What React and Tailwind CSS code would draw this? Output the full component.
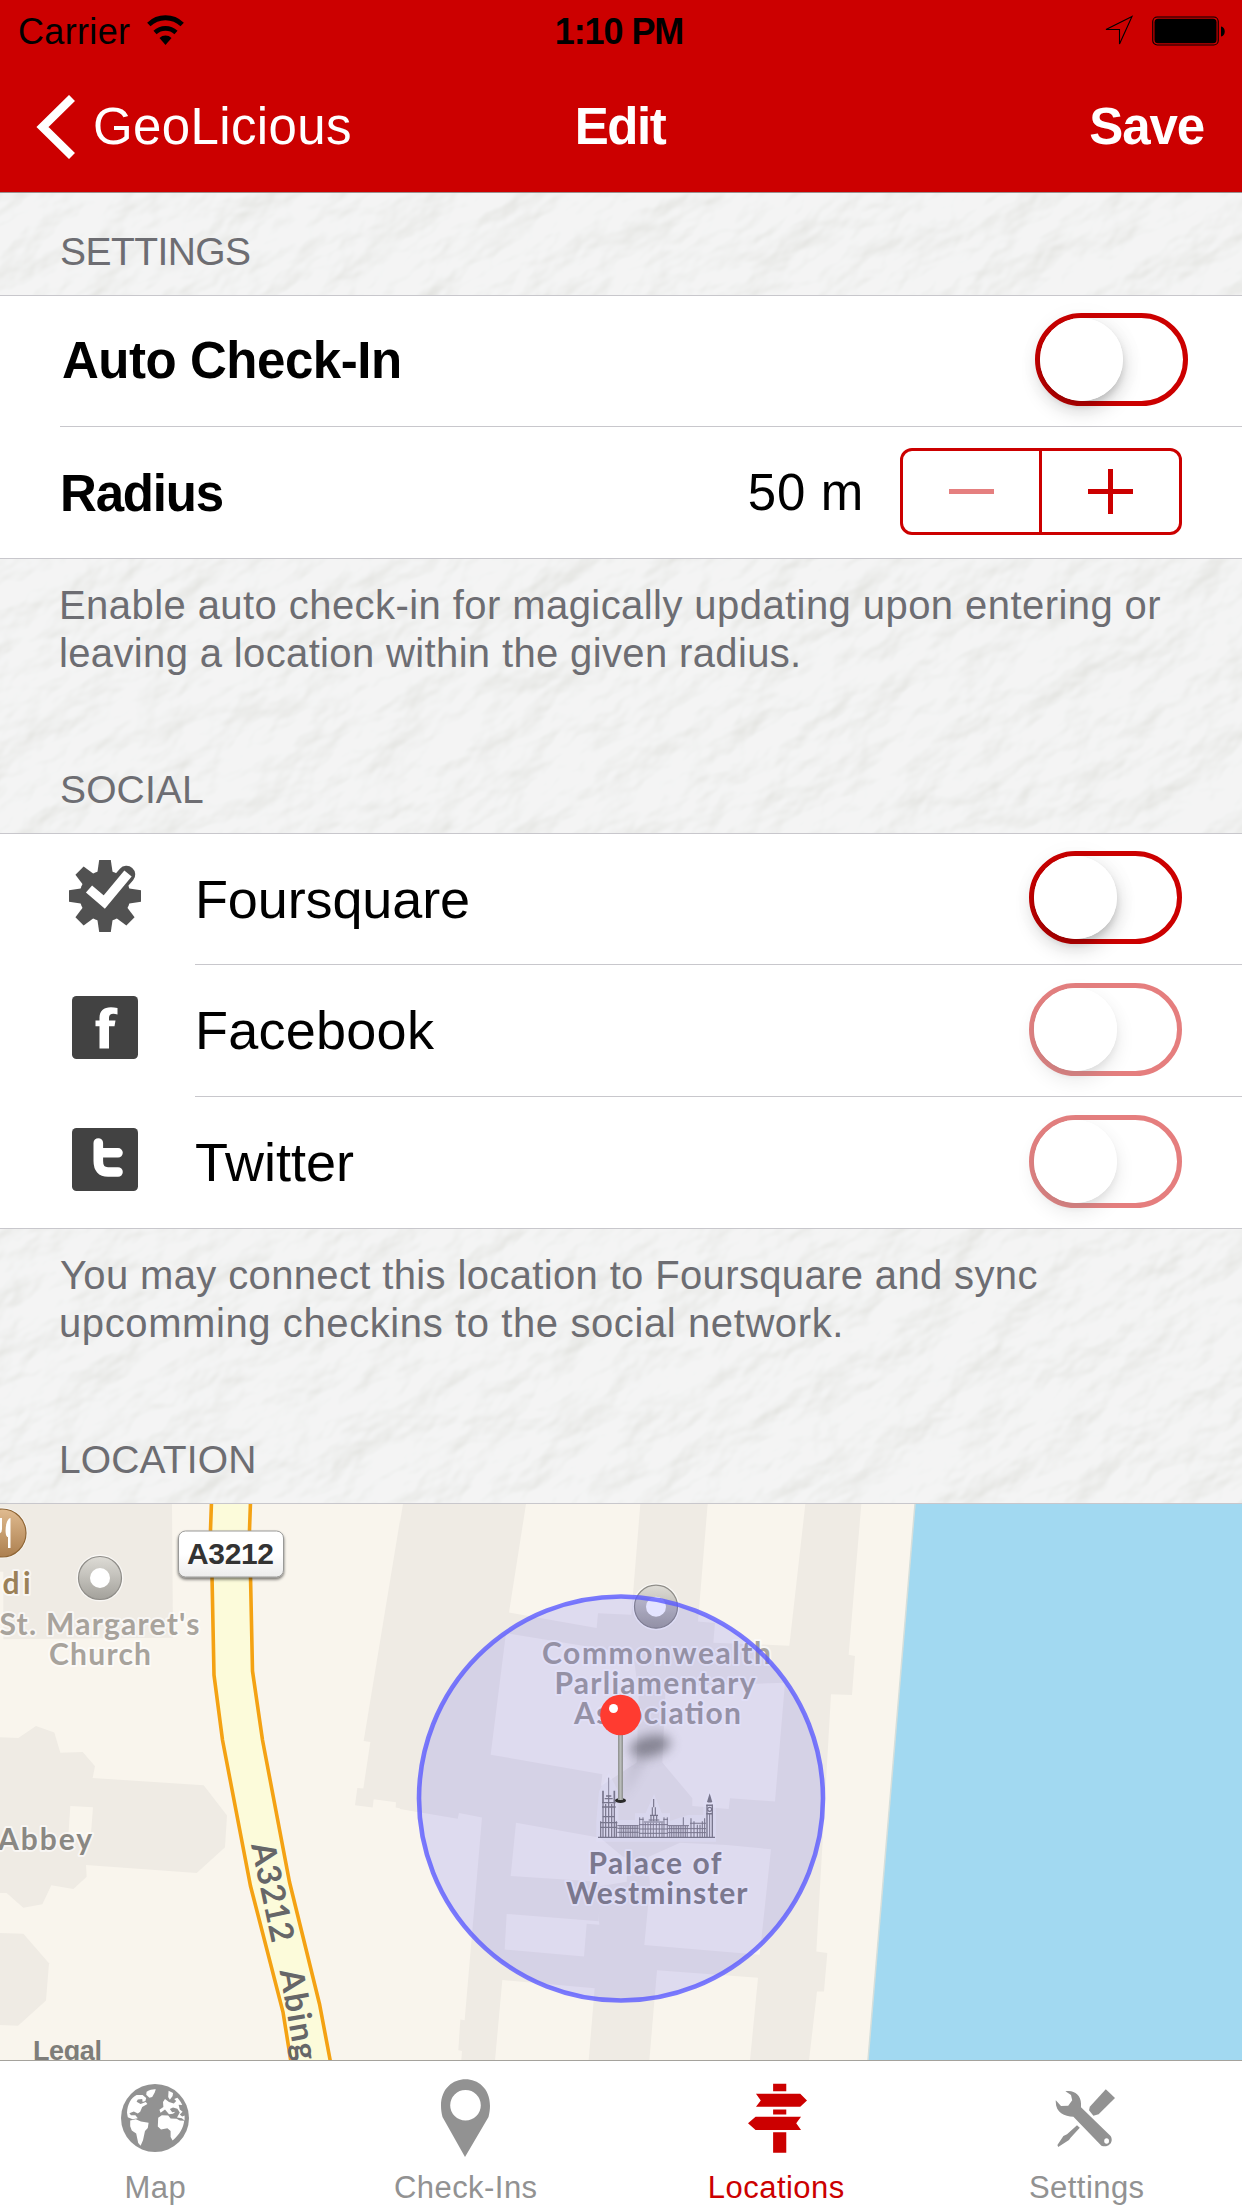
import React from "react";

const label = { fontFamily: "Lato, 'Open Sans', sans-serif", fontWeight: 700 };

function Leather() {
  return (
    <svg className="absolute inset-0" width="1242" height="2208" viewBox="0 0 1242 2208" aria-hidden="true">
      <defs>
        <filter id="grain" filterUnits="userSpaceOnUse" x="-1300" y="-200" width="2900" height="2900" colorInterpolationFilters="sRGB">
          <feTurbulence type="fractalNoise" baseFrequency="0.014 0.023" numOctaves="4" seed="8" />
          <feGaussianBlur stdDeviation="1.4" />
          <feDiffuseLighting surfaceScale="9" diffuseConstant="1.1" lightingColor="#ffffff">
            <feDistantLight azimuth="255" elevation="58" />
          </feDiffuseLighting>
          <feColorMatrix values="0.1 0 0 0 0.856  0 0.1 0 0 0.858  0 0 0.12 0 0.838  0 0 0 1 0" />
        </filter>
      </defs>
      <g transform="rotate(-30)">
        <rect x="-1300" y="-200" width="2900" height="2900" filter="url(#grain)" />
      </g>
    </svg>
  );
}

function StatusBar() {
  return (
    <div className="grid h-[63px] grid-cols-[1fr_auto_1fr] items-center text-[36px] leading-[63px] text-black">
      <div className="flex items-center pl-[18px]">
        <span className="tracking-[0.33px]">Carrier</span>
        <svg className="ml-[17px] -mt-[5px]" width="37" height="33" viewBox="0 0 37 33">
          <path d="M18.500 32 L12.500 25 A8.500 8.500 0 0 1 24.500 25 Z" fill="#000" />
          <path d="M8 19.500 A15.500 15.500 0 0 1 29 19.500" fill="none" stroke="#000" strokeWidth="4.600" />
          <path d="M1.800 11.500 A24 24 0 0 1 35.200 11.500" fill="none" stroke="#000" strokeWidth="4.800" />
        </svg>
      </div>
      <span className="-ml-[4px] font-bold tracking-[-1.08px]">1:10 PM</span>
      <div className="flex items-center justify-end pr-[16px]">
        <svg className="-mt-[3px]" width="30" height="31" viewBox="0 0 30 31">
          <path d="M28 1.500 L2 14.500 L15.500 14.500 L15.500 29 Z" fill="none" stroke="#000" strokeWidth="1.100" />
        </svg>
        <svg className="ml-[18px] -mt-[2px]" width="74" height="30" viewBox="0 0 74 30">
          <rect x="0.750" y="1" width="65.500" height="28" rx="4.500" fill="none" stroke="#000" strokeWidth="1.100" />
          <rect x="2.500" y="2.700" width="62" height="24.600" rx="3.500" fill="#000" />
          <path d="M69 10.500 C74 11 74 20 69 20.500 Z" fill="#000" />
        </svg>
      </div>
    </div>
  );
}

function NavBar() {
  return (
    <div className="grid h-[128px] grid-cols-[1fr_auto_1fr] items-center text-[51px] leading-[128px] text-white">
      <div className="flex items-center pl-[36px]">
        <svg width="40" height="64" viewBox="0 0 40 64">
          <path d="M36 3 L6.500 32 L36 61" fill="none" stroke="#fff" strokeWidth="8.500" />
        </svg>
        <span className="ml-[17px] tracking-[0.37px]">GeoLicious</span>
      </div>
      <span className="-ml-[2px] font-bold tracking-[-1.5px]">Edit</span>
      <span className="pr-[38px] text-right font-bold tracking-[-1.1px]">Save</span>
    </div>
  );
}

function Switch({ disabled }) {
  return (
    <div className={disabled ? "h-[93px] w-[153px] rounded-full opacity-50" : "h-[93px] w-[153px] rounded-full"}>
      <div className="h-full w-full rounded-full border-[5px] border-[#cc0000]">
        <div className="relative h-[83px] w-[83px]">
          <div className="h-full w-full rounded-full shadow-[0_9px_20px_rgba(0,0,0,0.18),0_5px_6px_rgba(0,0,0,0.12),0_0_28px_rgba(0,0,0,0.04)]" />
          <div className="absolute inset-0 rounded-full bg-white" />
        </div>
      </div>
    </div>
  );
}

function Stepper() {
  return (
    <div className="-mt-[2px] flex h-[87px] w-[282px] rounded-[12px] border-[3px] border-[#cc0000]">
      <div className="flex w-[139px] items-center justify-center border-r-[3px] border-[#cc0000]">
        <div className="h-[5px] w-[45px] bg-[#e57f7f]" />
      </div>
      <div className="flex flex-1 items-center justify-center">
        <svg width="45" height="45" viewBox="0 0 45 45">
          <path d="M0 22.500 H45 M22.500 0 V45" stroke="#cc0000" strokeWidth="5" />
        </svg>
      </div>
    </div>
  );
}

function FoursquareIcon() {
  return (
    <svg width="72" height="72" viewBox="0 0 72 72">
      <g fill="#515151">
        <circle cx="36" cy="36" r="25.500" />
        {[0, 45, 90, 135, 180, 225, 270, 315].map((a) => (
          <path key={a} d="M30.200 0 H41.800 L44 15 H28 Z" transform={`rotate(${a} 36 36)`} />
        ))}
      </g>
      <path d="M37 38 L57.500 14.500" stroke="#515151" strokeWidth="17.500" strokeLinecap="round" />
      <path d="M20 29 L35.300 42 L59 13.500" fill="none" stroke="#fff" strokeWidth="9.500" />
    </svg>
  );
}

function FacebookIcon() {
  return (
    <svg width="66" height="63" viewBox="0 0 66 63">
      <rect width="66" height="63" rx="4.500" fill="#424242" />
      <path d="M45.500 12 V18.500 C40 17 37 18 37 22 V24.500 H43.500 L42.500 30.300 H37 V52.500 H27.500 V30.300 H23.500 V24.500 H27.500 V22 C27.500 13 34 9.500 45.500 12 Z" fill="#fff" />
    </svg>
  );
}

function TwitterIcon() {
  return (
    <svg width="66" height="63" viewBox="0 0 66 63">
      <rect width="66" height="63" rx="4.500" fill="#424242" />
      <path d="M26.300 15 V33 Q26.300 44 36 44 H46 M26.300 24.800 H46" fill="none" stroke="#fff" strokeWidth="9.600" strokeLinecap="round" />
    </svg>
  );
}

function SocialRow({ icon, name, height, spacing, disabled, last }) {
  return (
    <div className={"flex bg-white pl-[69px] " + height}>
      <div className="flex w-[72px] items-center justify-center pb-[7px]">{icon}</div>
      <div className={"ml-[54px] flex flex-1 items-center justify-between pr-[60px] " + (last ? "" : "border-b border-[#c8c7cc]")}>
        <span className={"text-[54px] leading-[129px] text-black " + spacing}>{name}</span>
        <div className="-mt-[3px]"><Switch disabled={disabled} /></div>
      </div>
    </div>
  );
}

function Poi({ x, y, r = 21.5 }) {
  return (
    <g>
      <circle cx={x} cy={y} r={r + 2} fill="#fff" opacity="0.6" />
      <circle cx={x} cy={y} r={r} fill="url(#poiGrey)" stroke="#8f8d88" strokeWidth="1.200" />
      <circle cx={x} cy={y} r="10" fill="#fff" />
    </g>
  );
}

function MapLabel({ x, y, w, fill, children }) {
  return (
    <text x={x} y={y} textLength={w} fontSize="30" fill={fill} style={label} stroke="#fff" strokeOpacity="0.6" strokeWidth="4" strokeLinejoin="round" paintOrder="stroke">
      {children}
    </text>
  );
}

const windows = [...Array(11)].map((_, i) => 150 + i * 5.3);

function Parliament() {
  return (
    <g transform="translate(570 1680) scale(0.3333)">
      <path d="M84 480 V425 L92 335 L116 290 L140 335 V425 H200 V405 H230 L252 355 L272 405 H295 V430 L355 410 H405 V370 L419 340 L433 370 V480 Z" fill="#fff" opacity="0.3" stroke="#fff" strokeWidth="10" />
      <g stroke="#86837f" fill="none" strokeWidth="3.600">
        <path d="M84 472 H435" strokeWidth="3.500" />
        <path d="M92 424 V472 M99 366 V472 M107 372 V472 M116 345 V472 M125 372 V472 M133 366 V472 M139 424 V472" />
        <path d="M116 293 V350" strokeWidth="2.500" />
        <path d="M99 332 V366 M133 332 V366" strokeWidth="5" />
        <path d="M96 368 H137 M96 381 H137 M98 410 H134 M90 428 H142 M90 442 H142 M104 356 H128 M108 348 H124" strokeWidth="4" />
        {windows.map((x) => <path key={x} d={`M${x} 436 V472`} strokeWidth="2.600" />)}
        <path d="M142 437 H206 M142 445 H206 M142 457 H206" strokeWidth="3" />
        <path d="M209 412 V472 M219 412 V472 M226 428 V472 M234 428 V472 M242 428 V472 M250 428 V472 M259 428 V472 M268 428 V472 M276 428 V472 M282 412 V472 M292 412 V472" strokeWidth="2.800" />
        <path d="M207 418 H221 M280 418 H294 M222 426 H280 M207 434 H294 M207 447 H294 M207 460 H294" strokeWidth="3" />
        <path d="M251 357 V382" strokeWidth="3.500" />
        <path d="M247 382 V405 M256 382 V405 M243 405 V424 M251 405 V424 M260 405 V424 M240 406 H264 M236 420 H268" strokeWidth="3.400" />
        {windows.map((x) => <path key={x} d={`M${x + 149} 438 V472`} strokeWidth="2.600" />)}
        <path d="M294 437 H357 M294 446 H408 M294 458 H408 M340 412 V437" strokeWidth="3" />
        <path d="M363 415 V472 M372 424 V472 M382 434 V472 M390 434 V472 M397 424 V472 M404 415 V472 M360 430 H408" strokeWidth="3.200" />
        <path d="M411 374 V472 M427 374 V472" strokeWidth="4" />
        <path d="M419 400 V472" strokeWidth="3" />
        <path d="M409 376 H429 M409 401 H429 M413 365 H425" strokeWidth="4.500" />
        <circle cx="419" cy="388" r="6" />
      </g>
      <path d="M419 340 L427 366 H411 Z" fill="#86837f" />
    </g>
  );
}

function MapView() {
  return (
    <svg className="block" width="1242" height="556" viewBox="0 1504 1242 556">
      <defs>
        <linearGradient id="poiGrey" x1="0" y1="0" x2="0" y2="1">
          <stop offset="0" stopColor="#dedcd6" />
          <stop offset="1" stopColor="#a3a19b" />
        </linearGradient>
        <linearGradient id="poiBrown" x1="0" y1="0" x2="0" y2="1">
          <stop offset="0" stopColor="#e0bb90" />
          <stop offset="1" stopColor="#ac7f4f" />
        </linearGradient>
        <linearGradient id="badge" x1="0" y1="0" x2="0" y2="1">
          <stop offset="0.500" stopColor="#ffffff" />
          <stop offset="1" stopColor="#ececec" />
        </linearGradient>
        <linearGradient id="stick" x1="0" y1="0" x2="1" y2="0">
          <stop offset="0" stopColor="#8b8d8c" />
          <stop offset="0.500" stopColor="#b9bcba" />
          <stop offset="1" stopColor="#8b8d8c" />
        </linearGradient>
        <filter id="soft" x="-50%" y="-100%" width="200%" height="300%">
          <feGaussianBlur stdDeviation="6" />
        </filter>
        <filter id="drop" x="-10%" y="-20%" width="120%" height="160%">
          <feDropShadow dx="0" dy="2" stdDeviation="1.500" floodColor="#000" floodOpacity="0.550" />
        </filter>
      </defs>
      <rect x="0" y="1504" width="1242" height="556" fill="#f9f5ed" />

      <g transform="translate(0 1480) scale(0.33333 0.38265)" fill="#efebe4">
        <path d="M0 63 H516 L519 412 L10 416 V240 H0 Z" />
        <path d="M0 672 L55 674 L108 643 L163 660 L181 713 L248 711 L285 748 L278 779 L611 798 L681 877 L675 960 L590 1027 L258 1006 L260 1037 L220 1069 L154 1059 L127 1109 L70 1118 L20 1079 H0 Z" />
        <path d="M211 852 L279 855 L272 935 L205 930 Z" fill="#f9f5ed" />
        <path d="M0 1184 L70 1186 L147 1263 L138 1360 L54 1426 L0 1424 Z" />
        <path d="M1208 63 L1091 682 L1111 685 L1090 806 L1072 805 L1065 850 L1118 856 L1121 834 L1188 842 L1187 856 L1260 868 V63 Z" />
      </g>

      <g transform="translate(400 1480) scale(0.33333 0.38265)">
        <path d="M0 63 H1384 L1346 457 L1365 460 L1356 562 L1293 560 L1249 1232 L1282 1236 L1272 1337 L1251 1337 L1227 1517 H184 L186 1492 L175 1490 L181 1410 L194 1412 L246 882 L177 870 L173 885 L0 860 Z" fill="#efebe4" />
        <g fill="#f9f5ed">
          <path d="M0 63 H9 L0 110 Z" />
          <path d="M378 63 H721 L694 352 L594 348 L590 387 L327 346 Z" />
          <path d="M923 63 H1216 L1168 433 L940 425 L945 374 L894 370 Z" />
          <path d="M318 400 L700 455 L716 560 L710 738 L603 800 L607 769 L272 718 Z" />
          <path d="M797 540 L1155 530 L1125 840 L990 832 L986 860 L877 852 V832 L787 738 Z" />
          <path d="M348 896 L600 935 L668 984 L684 990 L680 1050 L600 1062 L596 1155 L597 1153 L598 1050 L332 1035 Z" />
          <path d="M320 1134 L597 1153 L598 1162 L560 1160 L552 1245 L314 1227 Z" />
          <path d="M840 948 L980 954 L1113 965 L1079 1241 L733 1215 L750 1060 L745 985 Z" />
          <path d="M307 1307 L584 1328 L566 1517 H285 Z" />
          <path d="M771 1281 L1074 1301 L1050 1517 H748 Z" />
        </g>
      </g>
      <path d="M915 1504 H1242 V2060 H868 Z" fill="#a2d9f1" />
      <path d="M915 1504 L868 2060" stroke="#d5dfdc" strokeWidth="1.500" />

      <path d="M211.500 1504 L210.500 1530 L212 1576 L214 1675 L222.500 1740 L250.500 1886 L283 2012 L291 2062 L330.500 2062 L319.500 2004 L289.500 1882 L262.500 1740 L252.500 1671 L250.500 1576 L249.500 1530 L250.500 1504 Z" fill="#fcfbda" />
      <path d="M211.500 1502 L210.500 1530 L212 1576 L214 1675 L222.500 1740 L250.500 1886 L283 2012 L291 2062 M250.500 1502 L249.500 1530 L250.500 1576 L252.500 1671 L262.500 1740 L289.500 1882 L319.500 2004 L330.500 2062" fill="none" stroke="#f4a213" strokeWidth="3.600" />
      <g style={label} fill="#666668" fontSize="33">
        <text transform="translate(251 1845) rotate(78)" textLength="101">A3212</text>
        <text transform="translate(279.500 1971) rotate(80)" textLength="108">Abings</text>
      </g>

      <rect x="178.500" y="1531" width="105" height="46" rx="7" fill="url(#badge)" stroke="#9a9a98" strokeWidth="1" filter="url(#drop)" />
      <text x="187" y="1564" textLength="87" fontFamily="'Liberation Sans', sans-serif" fontWeight="700" fontSize="30" fill="#333333">A3212</text>

      <circle cx="2" cy="1533" r="25.500" fill="#fff" opacity="0.600" />
      <circle cx="2" cy="1533" r="24" fill="url(#poiBrown)" stroke="#8f6636" strokeWidth="1.200" />
      <path d="M10.500 1518 V1548 H8 V1537 C4 1537 5 1519 10.500 1518 Z" fill="#fff" />
      <path d="M1 1518 V1529 Q1 1533 -3 1533" fill="none" stroke="#fff" strokeWidth="2" />
      <Poi x={100} y={1578} />
      <Poi x={656} y={1606.7} />

      <MapLabel x={2.5} y={1593.5} w={28} fill="#9b8158">di</MapLabel>
      <MapLabel x={-0.5} y={1634.5} w={200} fill="#a8a39c">St. Margaret's</MapLabel>
      <MapLabel x={49} y={1665} w={102} fill="#a8a39c">Church</MapLabel>
      <MapLabel x={-2} y={1849.5} w={94} fill="#8a8883">Abbey</MapLabel>
      <text x="33" y="2060" textLength="69" fontFamily="'Liberation Sans', sans-serif" fontWeight="700" fontSize="27" fill="#7e7d79">Legal</text>
      <MapLabel x={542} y={1664} w={229} fill="#a7a39b">Commonwealth</MapLabel>
      <MapLabel x={554.5} y={1694} w={201} fill="#a7a39b">Parliamentary</MapLabel>
      <MapLabel x={574} y={1724} w={167} fill="#a7a39b">Association</MapLabel>
      <Parliament />
      <MapLabel x={588.5} y={1873.5} w={133} fill="#8a8781">Palace of</MapLabel>
      <MapLabel x={566} y={1904} w={181.5} fill="#8a8781">Westminster</MapLabel>

      <circle cx="621" cy="1798.500" r="202" fill="#0000ff" fillOpacity="0.105" stroke="#5a5aff" strokeOpacity="0.800" strokeWidth="4.600" />

      <ellipse cx="650" cy="1746" rx="21" ry="10.500" transform="rotate(-12 650 1746)" fill="#444450" opacity="0.550" filter="url(#soft)" />
      <path d="M622 1800 L632 1758 L650 1752 Z" fill="#444450" opacity="0.150" filter="url(#soft)" />
      <ellipse cx="620.500" cy="1800.500" rx="5.500" ry="2.400" fill="#2b2b2b" />
      <rect x="618" y="1732" width="5" height="68" fill="url(#stick)" />
      <circle cx="620.500" cy="1715" r="20.300" fill="#ff3b30" />
      <circle cx="613.500" cy="1708.500" r="4.500" fill="#fff" />
    </svg>
  );
}

function GlobeIcon() {
  return (
    <svg width="68" height="68" viewBox="308 104 170 203" preserveAspectRatio="none">
      <ellipse cx="393" cy="205.500" rx="85" ry="101.500" fill="#929292" />
      <g fill="#fff">
        <path d="M323 190 C324 165 333 145 347 137 L362 137 L371 146 L369 155 L362 158 L361 149 L350 150 L347 157 L357 164 L370 158 L374 164 L361 173 L356 187 L350 192 L340 186 L329 191 L333 197 L344 197 L350 206 L337 209 L325 203 Z" />
        <path d="M372 127 C381 121 389 119 395 120 L392 130 L386 143 L379 145 L371 136 Z" />
        <path d="M331 213 L345 209 L358 216 L377 220 L375 235 L368 244 L363 272 L357 288 L351 280 L346 252 L335 243 L331 230 Z" />
        <path d="M427 124 L438 131 L437 140 L430 151 L426 143 Z" />
        <path d="M413 158 L418 149 L428 158 L440 162 L446 155 L441 149 L449 145 C456 155 460 162 461 167 L452 166 L455 180 L462 187 L455 195 L461 201 L467 198 L467 213 L460 206 L448 204 L455 189 L449 178 L438 174 L430 179 L436 188 L444 187 L438 193 L428 194 L418 180 L407 190 L404 181 L414 173 Z" />
        <path d="M401 205 L410 197 L426 198 L432 207 L447 208 L455 213 L466 214 C464 235 455 255 437 273 L432 262 L432 244 L424 236 L408 240 L400 231 Z" />
      </g>
    </svg>
  );
}

function PinIcon() {
  return (
    <svg width="53" height="79" viewBox="0 0 53 79">
      <path fillRule="evenodd" d="M26 78 L3.500 38 C-9 -12.500 62 -12.500 49.500 38 Z M26.500 11 A15.300 15.300 0 1 0 26.500 41.600 A15.300 15.300 0 1 0 26.500 11 Z" fill="#929292" />
    </svg>
  );
}

function SignIcon() {
  return (
    <svg className="ml-[3px]" width="59" height="70" viewBox="322 101 148 209" preserveAspectRatio="none">
      <path d="M385 103 H418 V126 H385 Z M342 133 H453 L470 153 L453 172 H342 L354 153 Z M385 180 H418 V195 H385 Z M455 202 L443 221 L455 241 H341 L322 221 L341 202 Z M385 248 H418 V309 H385 Z" fill="#cc0000" />
    </svg>
  );
}

function ToolsIcon() {
  return (
    <svg className="-ml-[3px]" width="60" height="58" viewBox="1098 117 150 174" preserveAspectRatio="none">
      <g fill="#929292">
        <path d="M1124 124 C1144 118 1164 134 1163 163 L1163 172 L1237 258 C1246 275 1232 295 1214 287 L1144 200 C1121 200 1098 187 1100 151 L1113 168 L1131 167 L1141 151 L1138 135 Z" />
        <path d="M1225 118 L1248 144 L1207 193 L1194 197 L1183 181 L1185 170 Z" />
        <path d="M1153 226 L1160 233 L1137 263 L1133 270 L1106 291 L1104 285 L1119 258 L1128 253 Z" />
      </g>
      <ellipse cx="1227" cy="273" rx="6" ry="8" fill="#fff" />
    </svg>
  );
}

function Tab({ icon, name, active }) {
  return (
    <div className="flex h-[147px] flex-1 flex-col items-center">
      <div className="flex h-[111px] items-center pt-[3px]">{icon}</div>
      <span className={"whitespace-nowrap text-[31px] leading-[32px] tracking-[0.45px] " + (active ? "text-[#cc0000]" : "text-[#929292]")}>{name}</span>
    </div>
  );
}

export default function App() {
  return (
    <div className="relative h-[2208px] w-[1242px] overflow-hidden bg-[#f1f2f1] font-['Liberation_Sans',Arial,sans-serif]">
      <Leather />
      <div className="relative flex flex-col">
        <header className="h-[193px] border-b border-[#9b8f8f] bg-[#cc0000]">
          <StatusBar />
          <NavBar />
        </header>

        <h2 className="h-[102px] pt-[35px] pl-[60px] text-[39px] leading-[48px] tracking-[-0.57px] text-[#6d6d72]">SETTINGS</h2>

        <section className="border-y border-[#c8c7cc] bg-white">
          <div className="flex h-[130px] items-center justify-between pr-[54px] pl-[62px]">
            <span className="text-[51px] leading-[130px] font-bold tracking-[-0.46px] text-black">Auto Check-In</span>
            <div className="-mt-[3px]"><Switch /></div>
          </div>
          <div className="ml-[60px] flex h-[132px] items-center border-t border-[#c8c7cc] pr-[60px]">
            <span className="pt-[2px] text-[51px] leading-[130px] font-bold tracking-[-1.2px] text-black">Radius</span>
            <span className="ml-auto pr-[36px] text-[51px] leading-[130px] tracking-[0.7px] text-black">50 m</span>
            <Stepper />
          </div>
        </section>

        <div className="flex h-[274px] flex-col justify-between pt-[22px] pb-[19px] pl-[59px] text-[#6d6d72]">
          <p className="text-[40px] leading-[48px] whitespace-nowrap">
            <span className="block tracking-[0.43px]">Enable auto check-in for magically updating upon entering or</span>
            <span className="block tracking-[0.36px]">leaving a location within the given radius.</span>
          </p>
          <h2 className="pl-px text-[39px] leading-[48px] tracking-[0.13px]">SOCIAL</h2>
        </div>

        <section className="border-y border-[#c8c7cc]">
          <SocialRow icon={<FoursquareIcon />} name="Foursquare" height="h-[131px]" spacing="tracking-[-0.12px]" />
          <SocialRow icon={<FacebookIcon />} name="Facebook" height="h-[132px]" spacing="tracking-[0.25px]" disabled />
          <SocialRow icon={<TwitterIcon />} name="Twitter" height="h-[131px]" spacing="tracking-normal" disabled last />
        </section>

        <div className="flex h-[274px] flex-col justify-between pt-[22px] pb-[19px] pl-[59px] text-[#6d6d72]">
          <p className="text-[40px] leading-[48px] whitespace-nowrap">
            <span className="block pl-px tracking-[0.36px]">You may connect this location to Foursquare and sync</span>
            <span className="block tracking-[0.6px]">upcomming checkins to the social network.</span>
          </p>
          <h2 className="text-[39px] leading-[48px] tracking-[0.13px]">LOCATION</h2>
        </div>

        <section className="border-t border-[#c8c7cc]">
          <MapView />
        </section>

        <nav className="flex border-t border-[#a5a29c] bg-white">
          <Tab icon={<GlobeIcon />} name="Map" />
          <Tab icon={<PinIcon />} name="Check-Ins" />
          <Tab icon={<SignIcon />} name="Locations" active />
          <Tab icon={<ToolsIcon />} name="Settings" />
        </nav>
      </div>
    </div>
  );
}
